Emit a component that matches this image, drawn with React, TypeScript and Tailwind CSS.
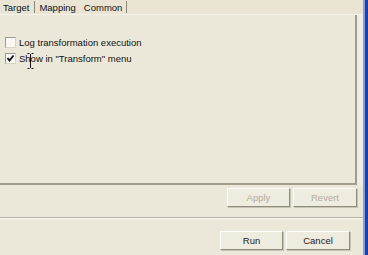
import React from "react";

function Btn({ label, disabled, w }: { label: string; disabled?: boolean; w: string }) {
  return (
    <div
      className={`${w} h-[19px] flex items-center justify-center border border-t-[#fdfdfb] border-l-[#fdfdfb] border-r-[#8f8c7e] border-b-[#8f8c7e] shadow-[1px_1px_0_#c8c4b4] bg-[#eeebdf] text-[9.5px] ${disabled ? "text-[#b2ae9f]" : "text-[#222]"}`}
    >
      {label}
    </div>
  );
}

function Check({ checked }: { checked?: boolean }) {
  return (
    <div className="w-[11px] h-[11px] shrink-0 border border-t-[#9e9b8c] border-l-[#9e9b8c] border-r-[#d8d4c6] border-b-[#d8d4c6] bg-[#f8f7f2] flex items-center justify-center">
      {checked && (
        <svg width="9" height="9" viewBox="0 0 9 9">
          <path d="M1.5 4 L3.5 6.5 L7.5 1.5" stroke="#111" strokeWidth="1.8" fill="none" />
        </svg>
      )}
    </div>
  );
}

export default function App() {
  return (
    <div
      className="relative w-[368px] h-[255px] bg-[#ebe8d9] flex overflow-hidden text-[9.5px] leading-[11px] text-[#111]"
      style={{ fontFamily: '"Liberation Sans", Arial, sans-serif' }}
    >
      <div className="flex-1 flex flex-col">
        {/* tab bar */}
        <div className="h-[14px] bg-[#e9e4d3] flex items-center">
          <span className="pl-[3px] pr-[5px]">Target</span>
          <span className="w-px h-[12px] bg-[#8a8778]" />
          <span className="pl-[4px] pr-[8px]">Mapping</span>
          <span className="pr-[4px]">Common</span>
          <span className="w-px h-[12px] bg-[#8a8778]" />
        </div>
        <div className="h-px bg-[#f6f3ea]" />
        {/* panel */}
        <div className="flex">
          <div className="w-[357px] h-[170px] border-r-2 border-b-2 border-[#a09d8f] flex flex-col pt-[22px] pl-[5px] gap-[5px]">
            <div className="h-[11px] flex items-center gap-[3px]">
              <Check />
              <span>Log transformation execution</span>
            </div>
            <div className="h-[11px] flex items-center gap-[3px]">
              <Check checked />
              <span>Show in "Transform" menu</span>
            </div>
          </div>
          <div className="flex-1 bg-[#efece2]" />
        </div>
        {/* apply revert */}
        <div className="flex justify-end gap-[3px] pr-[6px] pt-[3px]">
          <Btn label="Apply" disabled w="w-[63px]" />
          <Btn label="Revert" disabled w="w-[64px]" />
        </div>
        <div className="mt-[10px] h-px bg-[#b4b1a3]" />
        <div className="h-px bg-[#f8f6ee]" />
        <div className="flex justify-end gap-[3px] pr-[13px] pt-[12px]">
          <Btn label="Run" w="w-[63px]" />
          <Btn label="Cancel" w="w-[64px]" />
        </div>
      </div>
      <div className="w-[2px] bg-[#7fa0e8]" />
      <div className="w-[3px] bg-[#1d3fae]" />
      {/* I-beam cursor */}
      <svg className="absolute left-[27px] top-[53px]" width="7" height="16" viewBox="0 0 7 16">
        <path d="M0.5 0.5 H2.5 M4.5 0.5 H6.5 M3.5 1 V15 M0.5 15.5 H2.5 M4.5 15.5 H6.5" stroke="#111" strokeWidth="1" fill="none" />
      </svg>
    </div>
  );
}
